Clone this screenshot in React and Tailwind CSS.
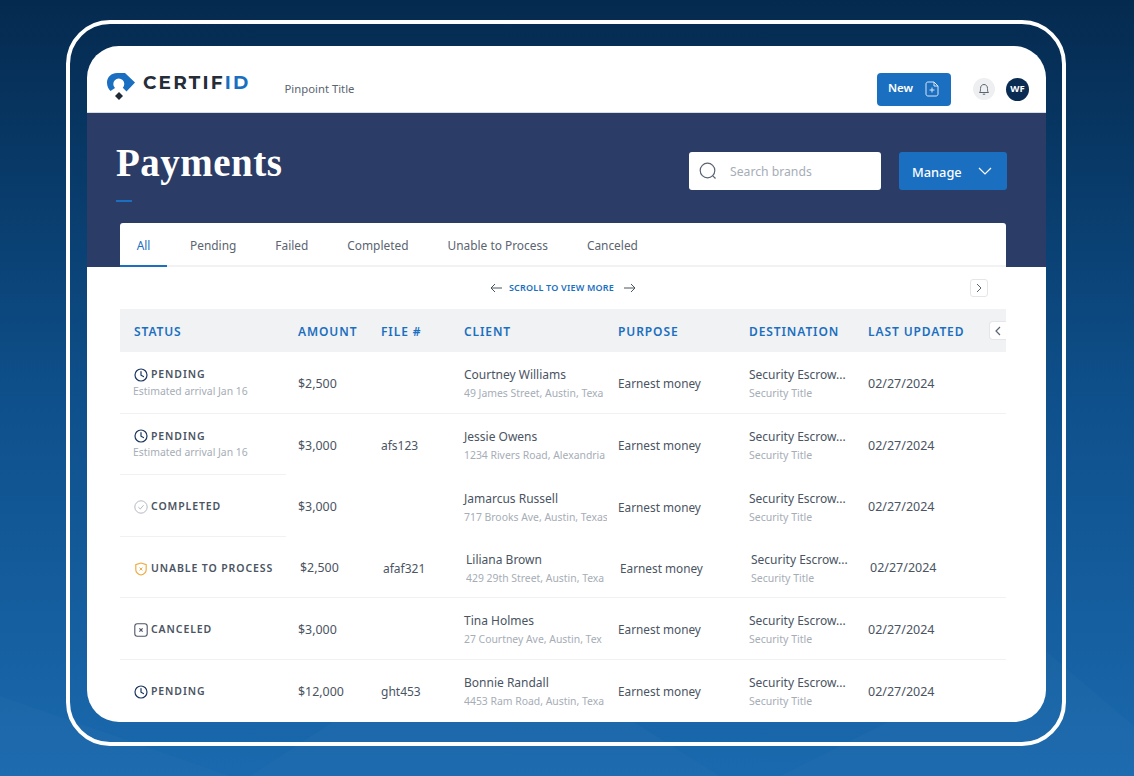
const tabs = ["All", "Pending", "Failed", "Completed", "Unable to Process", "Canceled"];

const rows = [
  { status: "PENDING", icon: "clock", note: "Estimated arrival Jan 16", amount: "$2,500", file: "", name: "Courtney Williams", addr: "49 James Street, Austin, Texa", line: "full" },
  { status: "PENDING", icon: "clock", note: "Estimated arrival Jan 16", amount: "$3,000", file: "afs123", name: "Jessie Owens", addr: "1234 Rivers Road, Alexandria", line: "part" },
  { status: "COMPLETED", icon: "check", amount: "$3,000", file: "", name: "Jamarcus Russell", addr: "717 Brooks Ave, Austin, Texas", line: "part" },
  { status: "UNABLE TO PROCESS", icon: "shield", amount: "$2,500", file: "afaf321", name: "Liliana Brown", addr: "429 29th Street, Austin, Texa", line: "full", nudge: true },
  { status: "CANCELED", icon: "cancel", amount: "$3,000", file: "", name: "Tina Holmes", addr: "27 Courtney Ave, Austin, Tex", line: "full" },
  { status: "PENDING", icon: "clock", amount: "$12,000", file: "ght453", name: "Bonnie Randall", addr: "4453 Ram Road, Austin, Texa", line: "none" },
];

function StatusIcon({ type }) {
  if (type === "clock") {
    return (
      <svg width="14" height="14" viewBox="0 0 14 14" fill="none" stroke="#1c3560" strokeWidth="1.2">
        <circle cx="7" cy="7" r="6" />
        <path d="M7 3.6V7.2L9.4 8.6" strokeLinecap="round" />
      </svg>
    );
  }
  if (type === "check") {
    return (
      <svg width="14" height="14" viewBox="0 0 14 14" fill="none" stroke="#b4bac2" strokeWidth="1">
        <circle cx="7" cy="7" r="6.2" />
        <path d="M4.4 7.2L6.3 9L9.6 5.2" />
      </svg>
    );
  }
  if (type === "shield") {
    return (
      <svg width="14" height="14" viewBox="0 0 14 14" fill="none" stroke="#f0ac45" strokeWidth="1.2">
        <path d="M7 1L12.2 2.6V7.4C12.2 10 9.6 12.2 7 13C4.4 12.2 1.8 10 1.8 7.4V2.6L7 1Z" strokeLinejoin="round" />
        <path d="M5.6 5.6L8.4 8.4M8.4 5.6L5.6 8.4" strokeWidth="1" />
      </svg>
    );
  }
  return (
    <svg width="14" height="14" viewBox="0 0 14 14" fill="none" stroke="#4a5565" strokeWidth="1.1">
      <rect x="0.8" y="0.8" width="12.4" height="12.4" rx="2.5" />
      <path d="M5.4 5.4L8.6 8.6M8.6 5.4L5.4 8.6" strokeWidth="1.2" />
    </svg>
  );
}

function Logo() {
  return (
    <svg width="28" height="27" viewBox="0 0 28 27">
      <path d="M3.5 18C1.2 16 0 13 0 9.5C0 4 4.5 0 10 0H18L28 9.5L19.5 18.5L15.8 14.8A5.5 5.5 0 1 0 8 15Z" fill="#1a6fc0" />
      <path d="M12 19L16 23L12 27L8 23Z" fill="#1f2a37" />
    </svg>
  );
}

function Row({ row }) {
  return (
    <div className={`flex h-[61.5px] items-center ${row.line === "full" ? "border-b border-[#f0f1f3]" : ""}`}>
      <div className={`flex h-full w-[166px] flex-col justify-center pl-[14px] ${row.note ? "pt-[2px]" : "pt-[4px]"} ${row.line === "part" ? "border-b border-[#f0f1f3]" : ""}`}>
        <div className="flex items-center gap-[3px]">
          <StatusIcon type={row.icon} />
          <span className="text-[10.5px] font-semibold tracking-[0.9px] text-[#4a5462]">{row.status}</span>
        </div>
        {row.note && <p className="-ml-[1px] mt-[1px] text-[10.4px] text-[#a6adb6]">{row.note}</p>}
      </div>
      <div className={`flex flex-1 items-center pt-[4px] text-[12px] text-[#4a5462] ${row.nudge ? "pl-[14px]" : "pl-[12px]"}`}>
        <span className="w-[83px] text-[12.4px]">{row.amount}</span>
        <span className="w-[83px]">{row.file}</span>
        <div className="w-[154px]">
          <p className="leading-[18px]">{row.name}</p>
          <p className="w-[143px] overflow-hidden whitespace-nowrap text-[10.4px] leading-[18px] text-[#a6adb6]">{row.addr}</p>
        </div>
        <span className="w-[131px] text-[11.8px]">Earnest money</span>
        <div className="w-[119px]">
          <p className="leading-[18px]">Security Escrow...</p>
          <p className="text-[10.5px] leading-[18px] text-[#a6adb6]">Security Title</p>
        </div>
        <span className="text-[12.5px]">02/27/2024</span>
      </div>
    </div>
  );
}

export default function App() {
  return (
    <div className="relative h-[776px] w-[1134px] overflow-hidden bg-gradient-to-b from-[#052a4f] via-[#0e4f8a] to-[#1a69ae] pl-[66px] pt-[20px] font-['Noto_Sans','Open_Sans',sans-serif]">
      {/* faint shapes in the background */}
      <svg className="absolute bottom-0 left-0" width="1134" height="200" viewBox="0 0 1134 200" fill="#ffffff" fillOpacity="0.018">
        <path d="M0 120L230 200H0Z" />
        <path d="M250 200L480 50L720 200Z" />
        <path d="M780 200L1040 70L1134 150V200Z" />
      </svg>

      <div className="relative h-[726px] w-[1000px] rounded-[44px] border-[4px] border-white pl-[17px] pt-[22px]">
        <div className="h-[676px] w-[959px] overflow-hidden rounded-[32px] bg-white">
          {/* top bar */}
          <div className="flex h-[67px] items-center border-b border-[#d9dde2] pl-[20px] pr-[17px] pt-[20px]">
            <div className="-mt-[6px] flex items-center">
              <Logo />
              <span className="-mt-[7px] ml-[8px] font-['Montserrat','Inter',sans-serif] text-[18.5px] font-bold tracking-[2.2px] text-[#252d38]">
                CERTIF<span className="text-[#1a6fc0]">ID</span>
              </span>
            </div>
            <span className="ml-[34px] text-[11.3px] text-[#5b6470]">Pinpoint Title</span>
            <button className="ml-auto flex h-[33px] w-[74px] items-center justify-between rounded-[4px] bg-[#1a6fc0] pl-[11px] pr-[12px] text-[11.5px] font-semibold text-white">
              <span className="-mt-[2px]">New</span>
              <svg width="14" height="16" viewBox="0 0 14 16" fill="none" stroke="#dbe7f3" strokeWidth="1">
                <path d="M3 1H9L13 5V13C13 14.2 12.2 15 11 15H3C1.8 15 1 14.2 1 13V3C1 1.8 1.8 1 3 1Z" />
                <path d="M9 1V5H13M7 6.5V11.5M4.5 9H9.5" />
              </svg>
            </button>
            <div className="ml-[22px] flex h-[22px] w-[22px] items-center justify-center rounded-full bg-[#eeeff1]">
              <svg width="12" height="13" viewBox="0 0 12 13" fill="none" stroke="#5a6472" strokeWidth="1">
                <path d="M1.5 9.5C2.5 8.5 2.5 7.5 2.5 5.5C2.5 3 4 1.5 6 1.5C8 1.5 9.5 3 9.5 5.5C9.5 7.5 9.5 8.5 10.5 9.5H1.5Z" strokeLinejoin="round" />
                <path d="M4.8 11.2H7.2" />
              </svg>
            </div>
            <div className="ml-[11px] flex h-[23px] w-[23px] items-center justify-center rounded-full bg-[#0a2c52] text-[9.5px] font-bold text-white">WF</div>
          </div>

          {/* navy banner */}
          <div className="h-[154px] bg-[#2b3c66] pl-[29px] pr-[39px]">
            <div className="flex items-start justify-between pt-[25px]">
              <div>
                <h1 className="mt-[2px] font-['Liberation_Serif',serif] text-[39px] font-bold leading-[46px] tracking-[0.5px] text-white">Payments</h1>
                <div className="mt-[14px] h-[2px] w-[16px] bg-[#1a6fc0]" />
              </div>
              <div className="mt-[14px] flex gap-[18px]">
                <div className="flex h-[38px] w-[192px] items-center rounded-[3px] bg-white pl-[10px]">
                  <svg width="18" height="18" viewBox="0 0 18 18" fill="none" stroke="#5a6472" strokeWidth="1.2">
                    <circle cx="8.5" cy="8.5" r="7.3" />
                    <path d="M13.8 13.8L16.5 16.5" />
                  </svg>
                  <span className="ml-[13px] mt-[3px] text-[12.2px] text-[#a6adb6]">Search brands</span>
                </div>
                <button className="flex h-[38px] w-[108px] items-center justify-between rounded-[3px] bg-[#1a6fc0] pl-[13px] pr-[15px] text-[12.8px] font-medium text-white">
                  <span className="mt-[3px]">Manage</span>
                  <svg width="14" height="8" viewBox="0 0 14 8" fill="none" stroke="white" strokeWidth="1.2">
                    <path d="M1 1L7 7L13 1" />
                  </svg>
                </button>
              </div>
            </div>
          </div>

          {/* table area pulled up over the banner */}
          <div className="relative -mt-[44px] ml-[33px] w-[886px]">
            <div className="flex h-[44px] rounded-t-[3px] border-b-2 border-[#f1f2f3] bg-white pt-[4px] text-[11.9px] text-[#5b6470]">
              {tabs.map((tab, i) => (
                <div
                  key={tab}
                  className={i === 0 ? "-mb-[2px] -mt-[4px] flex w-[47px] items-center justify-center border-b-2 border-[#1a6fc0] pt-[4px] text-[#1a6fc0]" : "ml-[23px] mr-[16px] flex items-center"}
                >
                  {tab}
                </div>
              ))}
            </div>

            <div className="relative flex h-[42px] items-center justify-center">
              <svg width="12" height="10" viewBox="0 0 12 10" fill="none" stroke="#4a5462" strokeWidth="1">
                <path d="M12 5H1M5 1L1 5L5 9" />
              </svg>
              <span className="ml-[7px] mr-[10px] text-[9px] font-semibold tracking-[0.2px] text-[#1a6fc0]">SCROLL TO VIEW MORE</span>
              <svg width="12" height="10" viewBox="0 0 12 10" fill="none" stroke="#4a5462" strokeWidth="1">
                <path d="M0 5H11M7 1L11 5L7 9" />
              </svg>
              <div className="absolute right-[18px] top-[12px] flex h-[18px] w-[18px] items-center justify-center rounded-[3px] border border-[#e4e6e9] bg-white">
                <svg width="6" height="10" viewBox="0 0 6 10" fill="none" stroke="#5a6472" strokeWidth="1">
                  <path d="M1 1L5 5L1 9" />
                </svg>
              </div>
            </div>

            <div className="relative flex h-[43px] items-center bg-[#f1f2f3] pl-[14px] pt-[2px] text-[12px] font-semibold tracking-[0.9px] text-[#1a6fc0]">
              <span className="w-[164px]">STATUS</span>
              <span className="w-[83px]">AMOUNT</span>
              <span className="w-[83px]">FILE #</span>
              <span className="w-[154px]">CLIENT</span>
              <span className="w-[131px]">PURPOSE</span>
              <span className="w-[119px]">DESTINATION</span>
              <span>LAST UPDATED</span>
              <div className="absolute right-0 top-[12px] flex h-[19px] w-[17px] items-center justify-center rounded-l-[4px] border border-r-0 border-[#e4e6e9] bg-white">
                <svg width="6" height="10" viewBox="0 0 6 10" fill="none" stroke="#5a6472" strokeWidth="1.2">
                  <path d="M5 1L1 5L5 9" />
                </svg>
              </div>
            </div>

            {rows.map((row) => (
              <Row key={row.name} row={row} />
            ))}
          </div>
        </div>
      </div>
    </div>
  );
}
